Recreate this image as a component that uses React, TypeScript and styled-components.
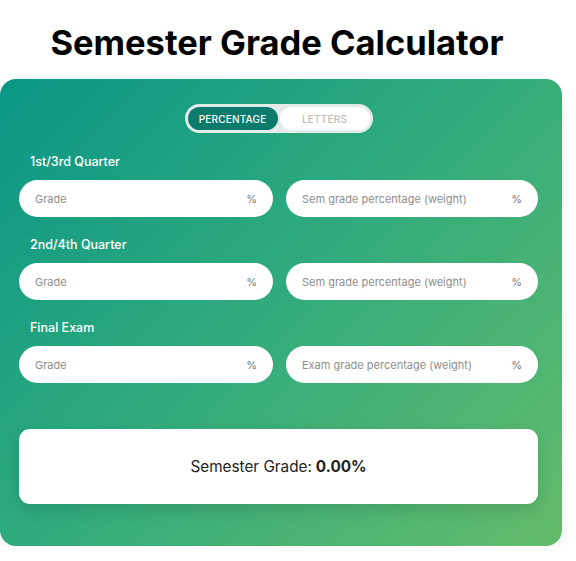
import React from "react";
import styled, { createGlobalStyle } from "styled-components";

const Global = createGlobalStyle`
  html, body { margin: 0; padding: 0; background: #ffffff; }
  body { font-family: Inter, "Noto Sans", sans-serif; }
  * { box-sizing: border-box; }
`;

const Page = styled.div`
  width: 562px;
  display: flex;
  flex-direction: column;
`;

const Title = styled.h1`
  margin: 23px 0 16px;
  padding-right: 8px;
  font-size: 34.5px;
  line-height: 40px;
  font-weight: 700;
  color: #000;
  text-align: center;
  letter-spacing: 0;
`;

const Card = styled.div`
  width: 562px;
  border-radius: 16px;
  background: linear-gradient(135deg, #0a9686 0%, #2eaa7d 45%, #64bc6b 100%);
  box-shadow: 0 4px 12px rgba(0, 0, 0, 0.08);
  padding: 25px 24px 42px 19px;
  display: flex;
  flex-direction: column;
`;

const Toggle = styled.div`
  align-self: center;
  display: flex;
  gap: 2px;
  padding: 3px;
  border-radius: 999px;
  background: #e4ecea;
`;

const ToggleBtn = styled.button<{ $active?: boolean }>`
  width: 90px;
  height: 23px;
  border: none;
  border-radius: 999px;
  font-family: Inter, sans-serif;
  font-size: 10px;
  font-weight: 500;
  letter-spacing: 0.2px;
  background: ${(p) => (p.$active ? "#0d7b6c" : "#ffffff")};
  color: ${(p) => (p.$active ? "#ffffff" : "#bdbdbd")};
  padding: 0;
  cursor: pointer;
`;

const Sections = styled.div`
  margin-top: 21px;
  display: flex;
  flex-direction: column;
  gap: 20px;
`;

const Section = styled.div`
  display: flex;
  flex-direction: column;
  gap: 10px;
`;

const Label = styled.div`
  padding-left: 11px;
  font-size: 12.5px;
  line-height: 16px;
  font-weight: 500;
  color: #ffffff;
`;

const Row = styled.div`
  display: grid;
  grid-template-columns: 254px 252px;
  gap: 13px;
`;

const Field = styled.div`
  height: 37px;
  border-radius: 999px;
  background: #ffffff;
  display: flex;
  align-items: center;
  padding: 0 16px 0 16px;
`;

const Input = styled.input`
  flex: 1;
  min-width: 0;
  border: none;
  outline: none;
  background: transparent;
  font-family: Inter, sans-serif;
  font-size: 11px;
  color: #333;
  padding: 0;
  &::placeholder { color: #8e8e8e; }
`;

const Unit = styled.span`
  font-size: 11px;
  color: #7a7a7a;
`;

const Result = styled.div`
  margin-top: 46px;
  height: 75px;
  border-radius: 11px;
  background: #ffffff;
  box-shadow: 0 6px 16px rgba(0, 0, 0, 0.12);
  display: flex;
  align-items: center;
  justify-content: center;
  font-size: 15.3px;
  color: #222;
`;

const Value = styled.b`
  font-weight: 700;
  margin-left: 4px;
`;

const sections = [
  { label: "1st/3rd Quarter", weight: "Sem grade percentage (weight)" },
  { label: "2nd/4th Quarter", weight: "Sem grade percentage (weight)" },
  { label: "Final Exam", weight: "Exam grade percentage (weight)" },
];

export default function App() {
  return (
    <Page>
      <Global />
      <Title>Semester Grade Calculator</Title>
      <Card>
        <Toggle>
          <ToggleBtn $active>PERCENTAGE</ToggleBtn>
          <ToggleBtn>LETTERS</ToggleBtn>
        </Toggle>
        <Sections>
          {sections.map((s) => (
            <Section key={s.label}>
              <Label>{s.label}</Label>
              <Row>
                <Field>
                  <Input placeholder="Grade" />
                  <Unit>%</Unit>
                </Field>
                <Field>
                  <Input placeholder={s.weight} />
                  <Unit>%</Unit>
                </Field>
              </Row>
            </Section>
          ))}
        </Sections>
        <Result>
          Semester Grade:<Value>0.00%</Value>
        </Result>
      </Card>
    </Page>
  );
}
